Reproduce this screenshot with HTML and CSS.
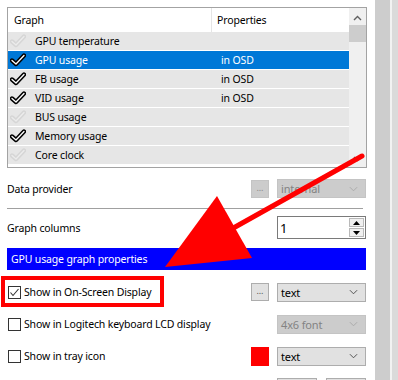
FILE: index.html
```html
<!DOCTYPE html>
<html>
    <head>
        <meta charset="utf-8" />
        <title>Monitoring graph properties</title>
        <link rel="stylesheet" href="styles.css">
    </head>
    <body>
        <div class="window">
            <div class="panel">
                <div class="listview">
                    <div class="lv-body">
                        <div class="lv-head">
                            <span class="col-graph">Graph</span>
                            <span class="col-props">Properties</span>
                        </div>
                        <div class="lv-row">
                            <span class="col-graph"><svg class="check off" viewBox="0 0 16 14"><path class="o" d="M2 7.5 L6 11 L14 2.5"/><path class="i" d="M2 7.5 L6 11 L14 2.5"/></svg>GPU temperature</span>
                            <span class="col-props"></span>
                        </div>
                        <div class="lv-row selected">
                            <span class="col-graph"><svg class="check on" viewBox="0 0 16 14"><path class="o" d="M2 7.5 L6 11 L14 2.5"/><path class="i" d="M2 7.5 L6 11 L14 2.5"/></svg>GPU usage</span>
                            <span class="col-props">in OSD</span>
                        </div>
                        <div class="lv-row">
                            <span class="col-graph"><svg class="check on" viewBox="0 0 16 14"><path class="o" d="M2 7.5 L6 11 L14 2.5"/><path class="i" d="M2 7.5 L6 11 L14 2.5"/></svg>FB usage</span>
                            <span class="col-props">in OSD</span>
                        </div>
                        <div class="lv-row">
                            <span class="col-graph"><svg class="check on" viewBox="0 0 16 14"><path class="o" d="M2 7.5 L6 11 L14 2.5"/><path class="i" d="M2 7.5 L6 11 L14 2.5"/></svg>VID usage</span>
                            <span class="col-props">in OSD</span>
                        </div>
                        <div class="lv-row">
                            <span class="col-graph"><svg class="check off" viewBox="0 0 16 14"><path class="o" d="M2 7.5 L6 11 L14 2.5"/><path class="i" d="M2 7.5 L6 11 L14 2.5"/></svg>BUS usage</span>
                            <span class="col-props"></span>
                        </div>
                        <div class="lv-row">
                            <span class="col-graph"><svg class="check on" viewBox="0 0 16 14"><path class="o" d="M2 7.5 L6 11 L14 2.5"/><path class="i" d="M2 7.5 L6 11 L14 2.5"/></svg>Memory usage</span>
                            <span class="col-props"></span>
                        </div>
                        <div class="lv-row">
                            <span class="col-graph"><svg class="check off" viewBox="0 0 16 14"><path class="o" d="M2 7.5 L6 11 L14 2.5"/><path class="i" d="M2 7.5 L6 11 L14 2.5"/></svg>Core clock</span>
                            <span class="col-props"></span>
                        </div>
                    </div>
                    <div class="lv-scroll">
                        <svg class="scroll-arrow" viewBox="0 0 9 6"><polyline points="1,5 4.5,1.5 8,5"/></svg>
                        <div class="scroll-thumb"></div>
                        <div class="scroll-fill"></div>
                        <svg class="scroll-arrow down" viewBox="0 0 9 6"><polyline points="1,1 4.5,4.5 8,1"/></svg>
                    </div>
                </div>

                <div class="field-row first">
                    <span class="field-label">Data provider</span>
                    <span class="dots-btn disabled">...</span>
                    <span class="combo disabled">internal<svg viewBox="0 0 10 6"><polyline points="1,1 5,5 9,1"/></svg></span>
                </div>
                <div class="divider"></div>
                <div class="field-row spin-row">
                    <span class="field-label">Graph columns</span>
                    <span class="spin">
                        <span class="spin-value">1</span>
                        <span class="spin-btns">
                            <span class="spin-btn"><svg viewBox="0 0 7 4"><polygon points="0,4 3.5,0 7,4"/></svg></span>
                            <span class="spin-btn"><svg viewBox="0 0 7 4"><polygon points="0,0 3.5,4 7,0"/></svg></span>
                        </span>
                    </span>
                </div>
                <div class="section-title">GPU usage graph properties</div>

                <div class="option-row">
                    <span class="checkbox checked"><svg viewBox="0 0 11 11"><polyline points="1.5,5.5 4,8.5 9.5,2"/></svg></span>
                    <span class="option-label">Show in On-Screen Display</span>
                    <span class="dots-btn">...</span>
                    <span class="combo">text<svg viewBox="0 0 10 6"><polyline points="1,1 5,5 9,1"/></svg></span>
                </div>
                <div class="option-row">
                    <span class="checkbox"></span>
                    <span class="option-label">Show in Logitech keyboard LCD display</span>
                    <span class="combo disabled">4x6 font<svg viewBox="0 0 10 6"><polyline points="1,1 5,5 9,1"/></svg></span>
                </div>
                <div class="option-row">
                    <span class="checkbox"></span>
                    <span class="option-label">Show in tray icon</span>
                    <span class="color-swatch"></span>
                    <span class="combo">text<svg viewBox="0 0 10 6"><polyline points="1,1 5,5 9,1"/></svg></span>
                </div>
                <div class="button-row">
                    <span class="push-btn"></span>
                    <span class="push-btn"></span>
                </div>
            </div>
            <div class="strip-a"></div>
            <div class="strip-b"></div>
            <div class="strip-c"></div>
        </div>

        <!-- annotation drawn over the screenshot -->
        <svg class="annotation" viewBox="0 0 398 380">
            <rect x="3" y="278" width="159" height="27" />
            <line x1="362" y1="156" x2="228" y2="231" />
            <polygon points="165,267 217,196 252,258" />
        </svg>
    </body>
</html>
```

FILE: styles.css
```css
* {
    box-sizing: border-box;
}
html, body {
    margin: 0;
    padding: 0;
}
body {
    width: 398px;
    height: 380px;
    overflow: hidden;
    position: relative;
    background: #fff;
    color: #000;
    font-family: "Noto Sans", "Liberation Sans", sans-serif;
    font-size: 10.5px;
    letter-spacing: -0.15px;
}
.window {
    display: flex;
    height: 380px;
}
.panel {
    width: 375px;
    padding: 7px 0 0 7px;
}
.strip-a {
    width: 15px;
    background: #cdcdcd;
}
.strip-b {
    width: 2px;
    background: #f2f2f2;
}
.strip-c {
    flex: 1;
    background: #dadada;
}

/* list view */
.listview {
    width: 360px;
    height: 161px;
    border: 1px solid #a3a3a3;
    display: flex;
}
.lv-body {
    flex: 1;
}
.lv-head, .lv-row {
    display: flex;
}
.lv-head {
    height: 24px;
    background: #fff;
}
.lv-head .col-graph {
    border-right: 1px solid #e5e5e5;
    padding-left: 6px;
}
.lv-head .col-props {
    padding-left: 5px;
}
.col-graph, .col-props {
    display: flex;
    align-items: center;
}
.col-graph {
    width: 204px;
}
.col-props {
    flex: 1;
    padding-left: 9px;
}
.lv-row {
    height: 19px;
    background: #e6e6e6;
    border-bottom: 1px solid #fff;
}
.lv-row .col-graph {
    padding-left: 2px;
}
.lv-row.selected {
    background: #0078d7;
    color: #fff;
}
.check {
    width: 16px;
    height: 14px;
    margin-right: 9px;
    fill: none;
    stroke-linecap: round;
    stroke-linejoin: round;
}
.check .o {
    stroke-width: 4.4;
}
.check .i {
    stroke-width: 1.3;
}
.check.on .o {
    stroke: #000;
}
.check.on .i {
    stroke: #fff;
}
.check.off .o {
    stroke: #d6d6d6;
}
.check.off .i {
    stroke: #ececec;
}
.lv-scroll {
    width: 17px;
    background: #f0f0f0;
    display: flex;
    flex-direction: column;
    align-items: center;
}
.scroll-arrow {
    width: 9px;
    height: 6px;
    margin: 7px 0 4px;
    fill: none;
    stroke: #606060;
    stroke-width: 1.4;
}
.scroll-arrow.down {
    margin: 0 0 5px;
}
.scroll-thumb {
    width: 17px;
    height: 17px;
    background: #cdcdcd;
}
.scroll-fill {
    flex: 1;
}

/* form rows */
.field-row, .option-row {
    width: 359px;
    display: flex;
    align-items: center;
}
.field-row.first {
    margin-top: 11px;
    height: 19px;
}
.field-label, .option-label {
    flex: 1;
}
.divider {
    width: 356px;
    height: 1px;
    margin-top: 10px;
    background: #a0a0a0;
}
.spin-row {
    margin-top: 7px;
    height: 23px;
}
.dots-btn {
    width: 18px;
    height: 18px;
    margin-right: 8px;
    background: #e1e1e1;
    border: 1px solid #adadad;
    color: #555;
    font-size: 9px;
    display: flex;
    align-items: flex-end;
    justify-content: center;
    padding-bottom: 3px;
}
.dots-btn.disabled {
    background: #cccccc;
    border-color: #c4c4c4;
    color: #8a8a8a;
}
.combo {
    width: 89px;
    height: 19px;
    background: #e1e1e1;
    border: 1px solid #adadad;
    display: flex;
    align-items: center;
    justify-content: space-between;
    padding: 0 7px 0 3px;
    font-size: 11px;
}
.combo svg {
    width: 9px;
    height: 6px;
    fill: none;
    stroke: #444;
    stroke-width: 1;
}
.combo.disabled {
    background: #cccccc;
    border-color: #c4c4c4;
    color: #838383;
}
.combo.disabled svg {
    stroke: #a8a8a8;
}
.spin {
    width: 89px;
    height: 23px;
    border: 1px solid #7a7a7a;
    background: #fff;
    display: flex;
}
.spin-value {
    flex: 1;
    padding-left: 2px;
    font-size: 13px;
    display: flex;
    align-items: center;
}
.spin-btns {
    width: 16px;
    display: flex;
    flex-direction: column;
    padding: 1px 1px 1px 0;
    gap: 1px;
}
.spin-btn {
    flex: 1;
    background: #f0f0f0;
    border: 1px solid #b9b9b9;
    display: flex;
    align-items: center;
    justify-content: center;
}
.spin-btn svg {
    width: 7px;
    height: 4px;
    fill: #000;
}
.section-title {
    width: 359px;
    height: 22px;
    margin-top: 9px;
    background: #0000ff;
    color: #fff;
    padding-left: 4px;
    display: flex;
    align-items: center;
}
.option-row {
    height: 20px;
    margin-top: 12px;
}
.checkbox {
    width: 13px;
    height: 13px;
    border: 1px solid #333;
    background: #fff;
    margin: 0 3px 0 1px;
    display: flex;
}
.checkbox svg {
    width: 11px;
    height: 11px;
    fill: none;
    stroke: #333;
    stroke-width: 1.1;
}
.color-swatch {
    width: 18px;
    height: 19px;
    margin-right: 8px;
    background: #ff0000;
}
.button-row {
    display: flex;
    gap: 9px;
    margin-top: 12px;
    padding-left: 270px;
}
.push-btn {
    width: 40px;
    height: 20px;
    border: 1px solid #adadad;
    background: #e1e1e1;
}

/* red highlight drawn on top */
.annotation {
    position: absolute;
    left: 0;
    top: 0;
    width: 398px;
    height: 380px;
}
.annotation rect {
    fill: none;
    stroke: #ff0000;
    stroke-width: 4;
}
.annotation line {
    stroke: #ff0000;
    stroke-width: 5;
    stroke-linecap: round;
}
.annotation polygon {
    fill: #ff0000;
}
```
